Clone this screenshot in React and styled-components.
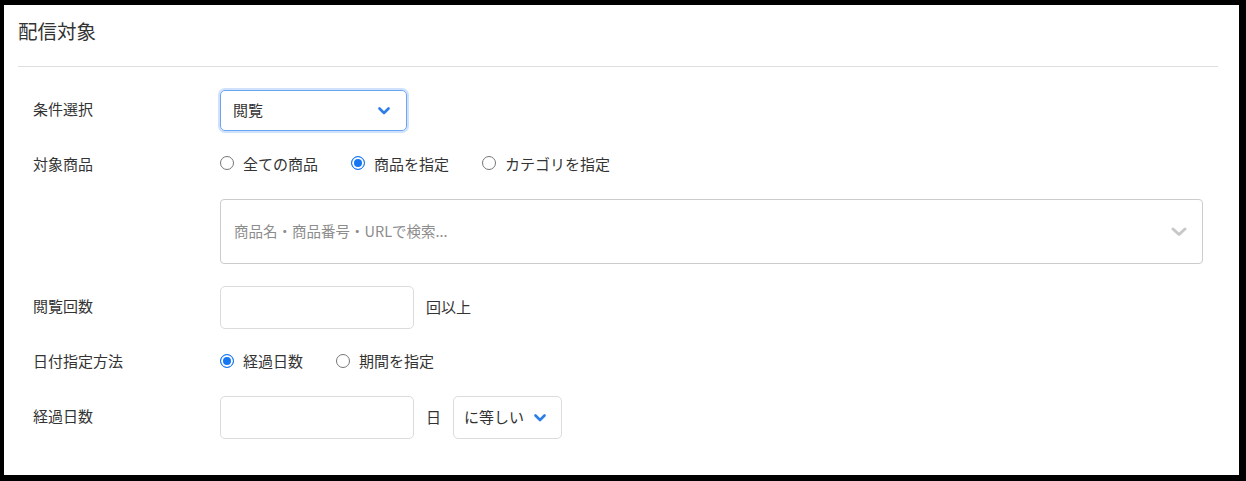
import React from "react";
import styled, { createGlobalStyle } from "styled-components";

const Global = createGlobalStyle`
  html, body { margin: 0; padding: 0; background: #000; }
  body {
    padding: 5px 7px 0 4px;
    font-family: "Noto Sans CJK JP", "Noto Sans", sans-serif;
    color: #333;
  }
  * { box-sizing: border-box; }
`;

const Panel = styled.div`
  background: #fff;
  height: 470px;
  padding: 0 21px 0 14px;
`;

const Header = styled.h2`
  margin: 0;
  padding: 12px 0 21px 0;
  font-size: 19.5px;
  line-height: 28px;
  font-weight: 400;
  color: #333;
  border-bottom: 1px solid #dedede;
`;

const Form = styled.div`
  display: flex;
  flex-direction: column;
  gap: 22px;
  padding: 23px 15px 0 15px;
`;

const Row = styled.div`
  display: grid;
  grid-template-columns: 187px 1fr;
  align-items: center;
  min-height: ${(p) => p.$h || 24}px;
`;

const Label = styled.div`
  font-size: 15px;
  line-height: 20px;
  padding-bottom: 3px;
  color: #333;
`;

const Controls = styled.div`
  display: flex;
  align-items: center;
  gap: ${(p) => p.$gap ?? 12}px;
`;

const SelectBox = styled.div`
  width: ${(p) => p.$w}px;
  height: ${(p) => p.$h}px;
  border: 1px solid ${(p) => (p.$focus ? "#6aa5f2" : "#dcdcdc")};
  border-radius: 5px;
  box-shadow: ${(p) => (p.$focus ? "0 0 0 2px rgba(120, 170, 245, 0.35)" : "none")};
  display: flex;
  align-items: center;
  justify-content: space-between;
  padding: 0 ${(p) => p.$pr}px 0 ${(p) => p.$pl}px;
  font-size: 15px;
  color: #333;
`;

const SelectText = styled.span`
  padding-bottom: 3px;
`;

const Input = styled.div`
  width: 194px;
  height: 43px;
  border: 1px solid #dcdcdc;
  border-radius: 5px;
  background: #fff;
`;

const Suffix = styled.span`
  font-size: 15px;
  padding-bottom: 3px;
  color: #333;
`;

const RadioGroup = styled.div`
  display: flex;
  align-items: center;
  gap: 33px;
`;

const RadioLabel = styled.label`
  display: flex;
  align-items: center;
  gap: 9px;
  font-size: 15px;
  line-height: 20px;
  color: #333;
`;

const RadioText = styled.span`
  padding-bottom: 3px;
`;

const Radio = styled.input`
  appearance: none;
  margin: 0 0 4px 0;
  width: 14px;
  height: 14px;
  border-radius: 50%;
  border: 1px solid #767676;
  background: #fff;
  flex: none;
  &:checked {
    border: 1.5px solid #1677f2;
    background: #1677f2;
    box-shadow: inset 0 0 0 2px #fff;
  }
`;

const Search = styled.div`
  width: 983px;
  height: 65px;
  border: 1px solid #cccccc;
  border-radius: 4px;
  display: flex;
  align-items: center;
  justify-content: space-between;
  padding: 0 15px 0 13px;
`;

const Placeholder = styled.span`
  font-size: 14.5px;
  padding-bottom: 3px;
  color: #8c8c8c;
`;

const BlueChevron = () => (
  <svg width="12" height="8" viewBox="0 0 12 8">
    <polyline
      points="1.5,1.5 6,6 10.5,1.5"
      fill="none"
      stroke="#2d7fe8"
      strokeWidth="2.6"
      strokeLinecap="round"
      strokeLinejoin="round"
    />
  </svg>
);

const GrayChevron = () => (
  <svg width="16" height="10" viewBox="0 0 16 10">
    <polyline
      points="2,2 8,7.5 14,2"
      fill="none"
      stroke="#c8c8c8"
      strokeWidth="3"
      strokeLinecap="round"
      strokeLinejoin="round"
    />
  </svg>
);

export default function App() {
  return (
    <>
      <Global />
      <Panel>
        <Header>配信対象</Header>
        <Form>
          <Row $h={41}>
            <Label>条件選択</Label>
            <Controls>
              <SelectBox $w={187} $h={41} $pl={12} $pr={16} $focus>
                <SelectText>閲覧</SelectText>
                <BlueChevron />
              </SelectBox>
            </Controls>
          </Row>
          <Row>
            <Label>対象商品</Label>
            <RadioGroup>
              <RadioLabel>
                <Radio type="radio" name="target" />
                <RadioText>全ての商品</RadioText>
              </RadioLabel>
              <RadioLabel>
                <Radio type="radio" name="target" defaultChecked />
                <RadioText>商品を指定</RadioText>
              </RadioLabel>
              <RadioLabel>
                <Radio type="radio" name="target" />
                <RadioText>カテゴリを指定</RadioText>
              </RadioLabel>
            </RadioGroup>
          </Row>
          <Row $h={65}>
            <Label />
            <Search>
              <Placeholder>商品名・商品番号・URLで検索...</Placeholder>
              <GrayChevron />
            </Search>
          </Row>
          <Row $h={43}>
            <Label>閲覧回数</Label>
            <Controls>
              <Input />
              <Suffix>回以上</Suffix>
            </Controls>
          </Row>
          <Row $h={23}>
            <Label>日付指定方法</Label>
            <RadioGroup>
              <RadioLabel>
                <Radio type="radio" name="date" defaultChecked />
                <RadioText>経過日数</RadioText>
              </RadioLabel>
              <RadioLabel>
                <Radio type="radio" name="date" />
                <RadioText>期間を指定</RadioText>
              </RadioLabel>
            </RadioGroup>
          </Row>
          <Row $h={43}>
            <Label>経過日数</Label>
            <Controls>
              <Input />
              <Suffix>日</Suffix>
              <SelectBox $w={109} $h={43} $pl={10} $pr={15}>
                <SelectText>に等しい</SelectText>
                <BlueChevron />
              </SelectBox>
            </Controls>
          </Row>
        </Form>
      </Panel>
    </>
  );
}
